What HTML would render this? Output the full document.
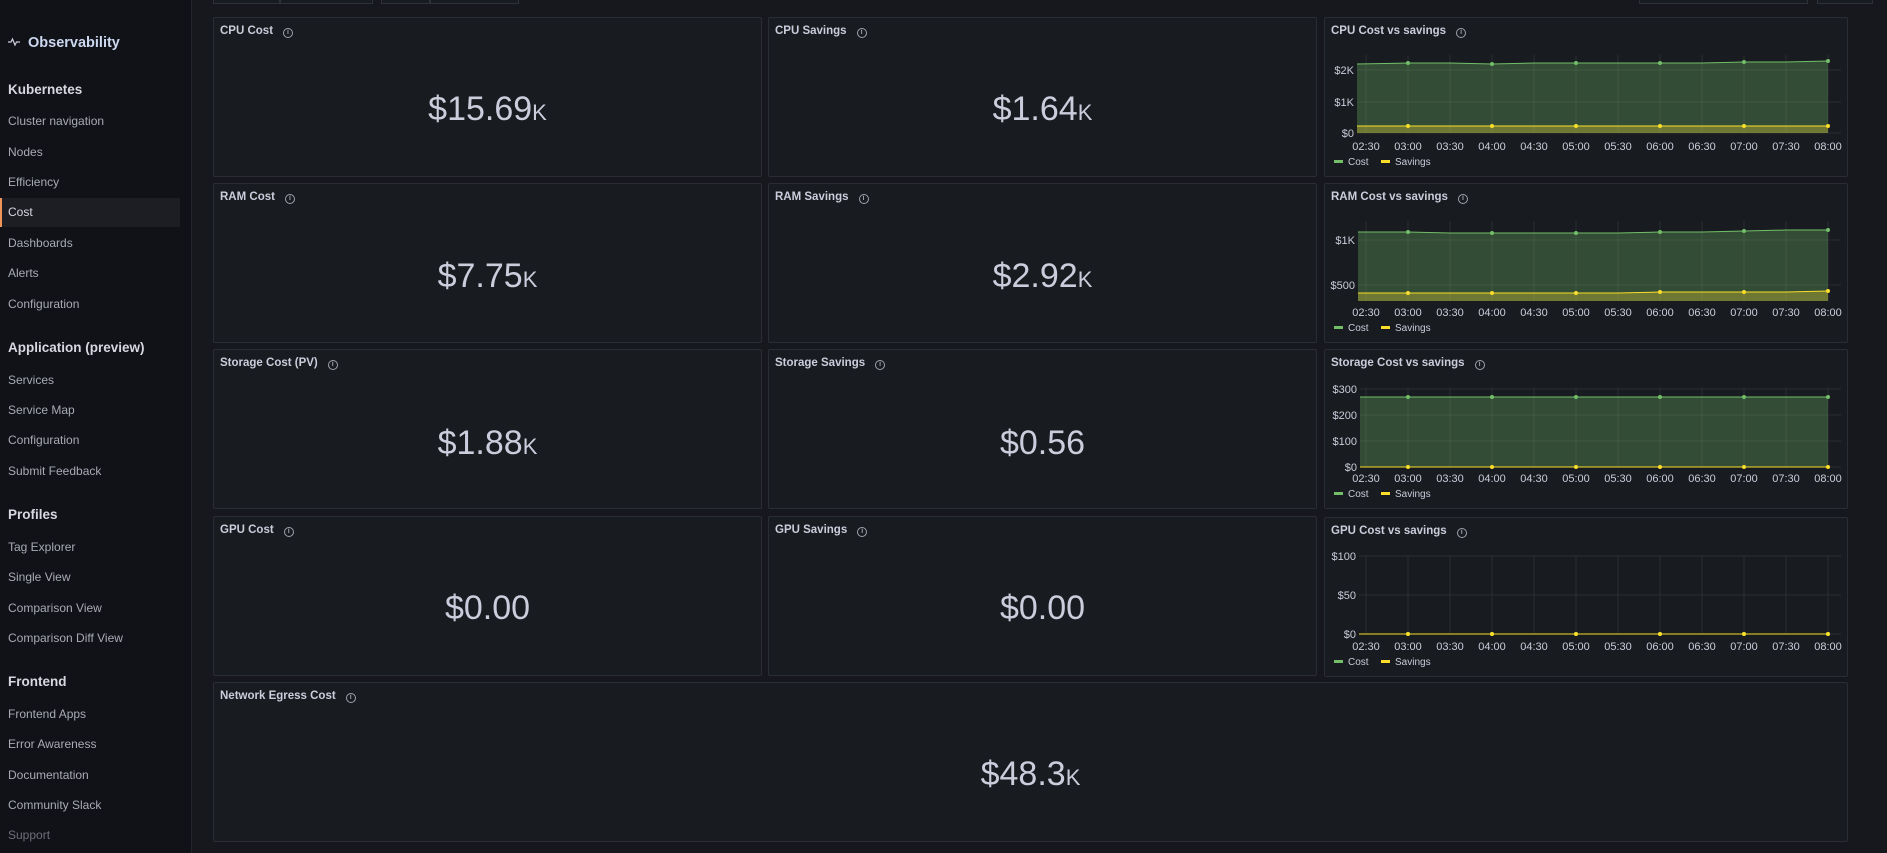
<!DOCTYPE html>
<html><head><meta charset="utf-8"><style>
*{box-sizing:border-box;margin:0;padding:0}
body{width:1887px;height:853px;overflow:hidden;background:#111217;font-family:"Liberation Sans",sans-serif;color:#ccccdc;position:relative}
#side{position:absolute;left:0;top:0;width:192px;height:853px;background:#111217;border-right:1px solid #22252b}
#main{position:absolute;left:192px;top:0;width:1695px;height:853px;background:#16181d}
.s{position:absolute;left:8px;font-size:12px;color:#a8abb5;white-space:nowrap}
.h{position:absolute;left:8px;font-size:13.5px;font-weight:bold;color:#d8d9e0}
.p{position:absolute;background:#181b1f;border:1px solid #2a2d33;border-radius:2px}
.t{position:absolute;left:6px;top:7px;font-size:11.5px;font-weight:bold;color:#ccccdc;white-space:nowrap}
.t i{display:inline-block;width:10px;height:10px;border:1px solid #9fa2ab;border-radius:50%;margin-left:10px;vertical-align:0px;font-style:normal;font-size:7px;text-align:center;line-height:8px;color:#9fa2ab;font-weight:bold}
.v{position:absolute;left:0;right:0;text-align:center;font-size:34px;color:#ccccdc}
.v small{font-size:22px}
.box{position:absolute;top:-2px;height:6px;border:1px solid #2e3138;border-top:none;background:#181b1f}
svg text{font-family:"Liberation Sans",sans-serif}
</style></head><body>
<div id="side">
<div style="position:absolute;left:8px;top:35px;font-size:14.5px;font-weight:bold;color:#ccd8f0">
<svg width="12" height="10" viewBox="0 0 12 10" style="vertical-align:0px;margin-right:8px"><path d="M0 5H3L4.5 2L7 8L8.5 5H12" fill="none" stroke="#ccd" stroke-width="1.2"/></svg>Observability</div>
<div class="h" style="top:82px">Kubernetes</div>
<div class="s" style="top:114px">Cluster navigation</div>
<div class="s" style="top:145px">Nodes</div>
<div class="s" style="top:175px">Efficiency</div>
<div style="position:absolute;left:0;top:198px;width:180px;height:29px;background:#1c1e23;border-left:2px solid #f0955a"></div>
<div class="s" style="top:205px;color:#d8d9e0">Cost</div>
<div class="s" style="top:236px">Dashboards</div>
<div class="s" style="top:266px">Alerts</div>
<div class="s" style="top:297px">Configuration</div>
<div class="h" style="top:340px">Application (preview)</div>
<div class="s" style="top:373px">Services</div>
<div class="s" style="top:403px">Service Map</div>
<div class="s" style="top:433px">Configuration</div>
<div class="s" style="top:464px">Submit Feedback</div>
<div class="h" style="top:507px">Profiles</div>
<div class="s" style="top:540px">Tag Explorer</div>
<div class="s" style="top:570px">Single View</div>
<div class="s" style="top:601px">Comparison View</div>
<div class="s" style="top:631px">Comparison Diff View</div>
<div class="h" style="top:674px">Frontend</div>
<div class="s" style="top:707px">Frontend Apps</div>
<div class="s" style="top:737px">Error Awareness</div>
<div class="s" style="top:768px">Documentation</div>
<div class="s" style="top:798px">Community Slack</div>
<div class="s" style="top:828px;color:#6e7079">Support</div>
</div>
<div id="main"></div>
<div class="box" style="left:213px;width:67px"></div><div class="box" style="left:280px;width:93px"></div>
<div class="box" style="left:381px;width:49px"></div><div class="box" style="left:430px;width:89px"></div>
<div class="box" style="left:1639px;width:169px"></div><div class="box" style="left:1817px;width:56px"></div>

<div class="p" style="left:213px;top:17px;width:549px;height:160px"><div class="t">CPU Cost<i>i</i></div><div class="v" style="top:72px">$15.69<small>K</small></div></div>
<div class="p" style="left:768px;top:17px;width:549px;height:160px"><div class="t">CPU Savings<i>i</i></div><div class="v" style="top:72px">$1.64<small>K</small></div></div>
<div class="p" style="left:213px;top:183px;width:549px;height:160px"><div class="t">RAM Cost<i>i</i></div><div class="v" style="top:73px">$7.75<small>K</small></div></div>
<div class="p" style="left:768px;top:183px;width:549px;height:160px"><div class="t">RAM Savings<i>i</i></div><div class="v" style="top:73px">$2.92<small>K</small></div></div>
<div class="p" style="left:213px;top:349px;width:549px;height:160px"><div class="t">Storage Cost (PV)<i>i</i></div><div class="v" style="top:74px">$1.88<small>K</small></div></div>
<div class="p" style="left:768px;top:349px;width:549px;height:160px"><div class="t">Storage Savings<i>i</i></div><div class="v" style="top:74px">$0.56</div></div>
<div class="p" style="left:213px;top:516px;width:549px;height:160px"><div class="t">GPU Cost<i>i</i></div><div class="v" style="top:72px">$0.00</div></div>
<div class="p" style="left:768px;top:516px;width:549px;height:160px"><div class="t">GPU Savings<i>i</i></div><div class="v" style="top:72px">$0.00</div></div>
<div class="p" style="left:213px;top:682px;width:1635px;height:160px"><div class="t">Network Egress Cost<i>i</i></div><div class="v" style="top:72px">$48.3<small>K</small></div></div>

<div id="charts"></div>
<script>
var cfg=[
{top:17,title:"CPU Cost vs savings",left:33,ylab:[["$2K",53],["$1K",85],["$0",116]],base:116,cost:[47,46,46,47,46,46,46,46,46,45,45,44],sav:[109,109,109,109,109,109,109,109,109,109,109,109],fill:true},
{top:183,title:"RAM Cost vs savings",left:34,ylab:[["$1K",57],["$500",102]],base:118,cost:[49,49,50,50,50,50,50,49,49,48,47,47],sav:[110,110,110,110,110,110,110,109,109,109,109,108],fill:true},
{top:349,title:"Storage Cost vs savings",left:36,ylab:[["$300",40],["$200",66],["$100",92],["$0",118]],base:118,cost:[48,48,48,48,48,48,48,48,48,48,48,48],sav:[118,118,118,118,118,118,118,118,118,118,118,118],fill:true},
{top:517,title:"GPU Cost vs savings",left:35,ylab:[["$100",39],["$50",78],["$0",117]],base:117,cost:[117,117,117,117,117,117,117,117,117,117,117,117],sav:[117,117,117,117,117,117,117,117,117,117,117,117],fill:false}
];
var times=["02:30","03:00","03:30","04:00","04:30","05:00","05:30","06:00","06:30","07:00","07:30","08:00"];
var out="";
cfg.forEach(function(c){
 var L=c.left,R=504,G=517,X0=42,dx=(R-X0)/11;
 var s='<div class="p" style="left:1324px;top:'+c.top+'px;width:524px;height:160px"><div class="t">'+c.title+'<i>i</i></div><svg width="524" height="160" style="position:absolute;left:-1px;top:-1px">';
 for(var i=0;i<12;i++){var x=X0+i*dx;s+='<line x1="'+x+'" y1="38" x2="'+x+'" y2="'+c.base+'" stroke="#2a2d32"/>';
  s+='<text x="'+x+'" y="133" fill="#ccccdc" font-size="11" text-anchor="middle">'+times[i]+'</text>';}
 c.ylab.forEach(function(y){s+='<line x1="'+L+'" y1="'+y[1]+'" x2="'+G+'" y2="'+y[1]+'" stroke="#2a2d32"/><text x="'+(L-3)+'" y="'+(y[1]+4)+'" fill="#ccccdc" font-size="11" text-anchor="end">'+y[0]+'</text>';});
 function xs(i){return i==0?L:X0+i*dx;}
 var cp="",sp="";
 for(var i=0;i<12;i++){cp+=(i?"L":"M")+xs(i)+" "+c.cost[i];sp+=(i?"L":"M")+xs(i)+" "+c.sav[i];}
 if(c.fill){s+='<path d="'+cp+'L'+R+' '+c.base+'L'+L+' '+c.base+'Z" fill="#73bf69" fill-opacity="0.3"/>';
  s+='<path d="'+sp+'L'+R+' '+c.base+'L'+L+' '+c.base+'Z" fill="#fade2a" fill-opacity="0.3"/>';}
 s+='<path d="'+cp+'" fill="none" stroke="#73bf69" stroke-width="1"/><path d="'+sp+'" fill="none" stroke="#fade2a" stroke-width="1"/>';
 for(var i=1;i<12;i+=2){s+='<circle cx="'+xs(i)+'" cy="'+c.cost[i]+'" r="2" fill="#73bf69"/><circle cx="'+xs(i)+'" cy="'+c.sav[i]+'" r="2" fill="#fade2a"/>';}
 s+='<rect x="10" y="143" width="9" height="3" fill="#73bf69"/><text x="24" y="148" fill="#ccccdc" font-size="10">Cost</text><rect x="57" y="143" width="9" height="3" fill="#fade2a"/><text x="71" y="148" fill="#ccccdc" font-size="10">Savings</text>';
 s+='</svg></div>';out+=s;
});
document.getElementById("charts").innerHTML=out;
</script>
</body></html>
